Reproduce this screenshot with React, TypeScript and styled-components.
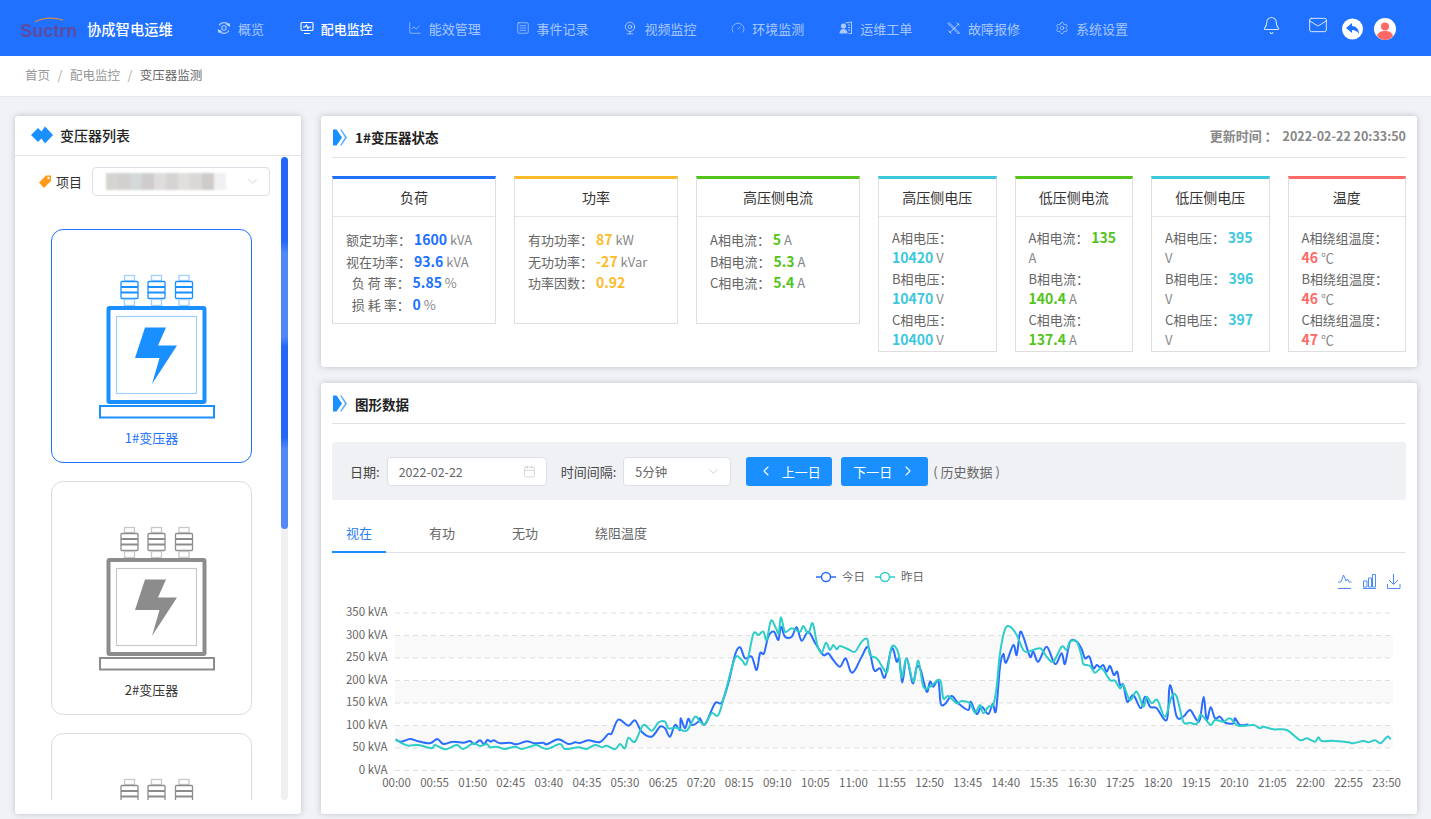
import React from 'react';
import styled, { createGlobalStyle } from 'styled-components';
import {
  Bell,
  Calendar,
  ChartLine,
  ChevronDown,
  ChevronLeft,
  ChevronRight,
  Gauge,
  Mail,
  Settings,
  SquareMenu,
  Webcam
} from 'lucide-react';

const FONT = '"Noto Sans CJK SC", "Noto Sans", sans-serif';

const GlobalStyle = createGlobalStyle`
  html, body {
    margin: 0;
    height: 100%;
    overflow: hidden;
    background: #f0f2f6;
    font-family: ${FONT};
  }
  * {
    box-sizing: border-box;
  }
`;

const Page = styled.div`
  width: 1431px;
  height: 819px;
  display: flex;
  flex-direction: column;
`;

/* top bar */
const TopBar = styled.header`
  height: 56px;
  flex: none;
  background: #2071ff;
  display: flex;
  align-items: center;
  padding-left: 20px;
`;

const Logo = styled.div`
  position: relative;
  width: 56px;
  height: 20px;
  margin-top: 3px;
  font: bold 18px/22px 'Liberation Sans', sans-serif;
  color: #5f4a9c;
  filter: blur(0.4px);
  svg {
    position: absolute;
    left: 14px;
    top: -3px;
  }
`;

const BrandName = styled.div`
  width: 130px;
  margin-left: 11px;
  color: #fff;
  font-size: 14.3px;
  font-weight: 500;
  white-space: nowrap;
`;

const Nav = styled.nav`
  display: flex;
  align-items: center;
  gap: 34.85px;
`;

const NavItem = styled.div<{ $active?: boolean }>`
  display: flex;
  align-items: center;
  gap: 7px;
  font-size: 13px;
  white-space: nowrap;
  color: ${(p) => (p.$active ? '#fff' : 'rgba(255,255,255,.62)')};
  font-weight: ${(p) => (p.$active ? 500 : 400)};
  &:first-child {
    margin-right: 1px;
  }
  svg {
    width: 14px;
    height: 14px;
    flex: none;
  }
`;

const TopRight = styled.div`
  margin-left: auto;
  display: flex;
  align-items: center;
  padding-right: 35px;
  height: 100%;
`;

const TopIcon = styled.div<{ $gap: number; $top: number }>`
  display: flex;
  margin-left: ${(p) => p.$gap}px;
  margin-top: ${(p) => p.$top}px;
  color: rgba(255, 255, 255, 0.82);
`;

/* breadcrumb */
const Crumbs = styled.div`
  height: 41px;
  flex: none;
  background: #fff;
  border-bottom: 1px solid #e6e8ec;
  display: flex;
  align-items: center;
  padding: 0 0 3px 25px;
  font-size: 12.5px;
  color: #999;
`;

const CrumbSep = styled.span`
  margin: 0 7.5px;
  color: #aaa;
`;

const CrumbLast = styled.span`
  color: #666;
`;

/* page body */
const Main = styled.main`
  flex: 1;
  min-height: 0;
  display: grid;
  grid-template-columns: 286px 1fr;
  gap: 20px;
  padding: 19px 14px 5px 15px;
`;

const Panel = styled.section`
  background: #fff;
  border-radius: 3px;
  box-shadow: 0 0 6px rgba(60, 70, 90, 0.28);
`;

const ListPanel = styled(Panel)`
  position: relative;
  display: flex;
  flex-direction: column;
  min-height: 0;
`;

const ListHeader = styled.div`
  height: 40px;
  flex: none;
  display: flex;
  align-items: center;
  gap: 7px;
  padding: 0 0 2px 16px;
  border-bottom: 1px solid #e4e4e4;
  font-size: 14px;
  font-weight: 500;
  color: #222;
`;

const ProjectRow = styled.div`
  display: flex;
  align-items: center;
  flex: none;
  padding: 11px 0 0 23px;
  height: 40px;
`;

const ProjectLabel = styled.div`
  width: 54px;
  display: flex;
  align-items: center;
  gap: 4px;
  font-size: 13px;
  color: #333;
`;

const SelectBox = styled.div<{ $w: number }>`
  position: relative;
  width: ${(p) => p.$w}px;
  height: 29px;
  background: #fff;
  border: 1px solid #dcdfe6;
  border-radius: 4px;
  display: flex;
  align-items: center;
  padding-left: 11px;
  font-size: 12.5px;
  color: #666;
  svg {
    position: absolute;
    right: 9px;
    top: 6px;
    color: #c0c4cc;
  }
`;

const DateIcon = styled(Calendar)`
  && {
    right: 10px;
    top: 7px;
  }
`;

const Mosaic = styled.div`
  display: flex;
  height: 17px;
  margin-left: 2px;
  filter: blur(1px);
`;

const MosaicCell = styled.span<{ $c: string }>`
  width: 12px;
  height: 100%;
  background: ${(p) => p.$c};
`;

const CardList = styled.div`
  flex: 1;
  min-height: 0;
  margin-bottom: 14px;
  margin-top: 33px;
  padding-left: 36px;
  overflow: hidden;
  display: flex;
  flex-direction: column;
  gap: 18px;
`;

const DeviceCard = styled.div<{ $active?: boolean }>`
  width: 201px;
  height: 234px;
  flex: none;
  border: 1px solid ${(p) => (p.$active ? '#2071ff' : '#dcdcdc')};
  border-radius: 12px;
  padding-top: 44px;
  display: flex;
  flex-direction: column;
  align-items: center;
  color: ${(p) => (p.$active ? '#2071ff' : '#333')};
  svg {
    margin-left: 11px;
  }
`;

const DeviceName = styled.div`
  font-size: 13px;
  line-height: 16px;
  margin-top: 11px;
`;

const ScrollTrack = styled.div`
  position: absolute;
  left: 266px;
  top: 41px;
  width: 7px;
  height: 643px;
  border-radius: 4px;
  background: #f0f0f2;
`;

const ScrollThumb = styled.div`
  width: 7px;
  height: 372px;
  border-radius: 4px;
  background: linear-gradient(
    to bottom,
    #2268f5 0 84px,
    #4f88f7 96px 180px,
    #2268f5 190px 280px,
    #5289f6 292px 372px
  );
`;

const RightCol = styled.div`
  display: flex;
  flex-direction: column;
  gap: 16px;
  min-height: 0;
`;

const StatusPanel = styled(Panel)`
  height: 251px;
  flex: none;
  padding: 0 11px;
`;

const ChartPanel = styled(Panel)`
  flex: 1;
  min-height: 0;
  padding: 0 11px;
`;

const SectionHead = styled.div<{ $h: number }>`
  height: ${(p) => p.$h}px;
  display: flex;
  align-items: center;
  gap: 8px;
  border-bottom: 1px solid #e2e2e2;
  padding: 1px 0 0 1px;
  font-size: 13.5px;
  font-weight: 700;
  color: #222;
`;

const UpdateTime = styled.div`
  margin-left: auto;
  margin-top: -4px;
  color: #888;
  font-weight: 700;
  font-size: 13px;
  white-space: nowrap;
`;

const UpdateDate = styled.span`
  font-size: 12.5px;
  margin-left: 2px;
`;

const StatGrid = styled.div`
  display: grid;
  grid-template-columns: repeat(3, 164px) repeat(4, 1fr);
  gap: 18px;
  margin-top: 18px;
  align-items: start;
`;

const StatCard = styled.div<{ $color: string; $tall?: boolean }>`
  height: ${(p) => (p.$tall ? 176 : 148)}px;
  overflow: hidden;
  border: 1px solid #dedede;
  border-top: 3px solid ${(p) => p.$color};
`;

const StatTitle = styled.div`
  height: 38px;
  display: flex;
  align-items: center;
  justify-content: center;
  padding-bottom: 2px;
  border-bottom: 1px solid #e6e6e6;
  font-size: 14px;
  color: #333;
`;

const StatBody = styled.div<{ $tall?: boolean }>`
  padding: ${(p) => (p.$tall ? '11px 13px 0' : '12px 13px 0')};
  font-size: 13px;
  line-height: ${(p) => (p.$tall ? '20.4px' : '21.6px')};
  color: #666;
`;

const StatValue = styled.span<{ $color: string }>`
  font-size: 14px;
  line-height: 1;
  font-weight: 700;
  color: ${(p) => p.$color};
`;

const Unit = styled.span`
  color: #888;
`;

/* filter bar */
const FilterBar = styled.div`
  height: 58px;
  margin-top: 18px;
  background: #f0f1f5;
  border-radius: 3px;
  display: flex;
  align-items: center;
  padding-left: 18px;
  font-size: 13px;
  color: #444;
`;

const FilterLabel = styled.span<{ $left?: number }>`
  margin-left: ${(p) => p.$left || 0}px;
  margin-right: 7px;
  white-space: nowrap;
`;

const DayButton = styled.div<{ $left: number; $w: number }>`
  width: ${(p) => p.$w}px;
  height: 29px;
  margin-left: ${(p) => p.$left}px;
  background: #1a8fff;
  border-radius: 3px;
  color: #fff;
  font-size: 13px;
  display: flex;
  align-items: center;
  justify-content: center;
  gap: 8px;
`;

const Hint = styled.span`
  margin-left: 5px;
  color: #666;
  white-space: nowrap;
`;

/* tabs */
const Tabs = styled.div`
  display: flex;
  gap: 29px;
  margin-top: 20px;
  height: 33px;
  border-bottom: 1px solid #dfe1e6;
`;

const Tab = styled.div<{ $active?: boolean }>`
  padding: 0 14px;
  height: 33px;
  line-height: 26px;
  font-size: 13px;
  color: ${(p) => (p.$active ? '#2a80f0' : '#666')};
  border-bottom: 2px solid ${(p) => (p.$active ? '#1a8fff' : 'transparent')};
`;

const ChartSvg = styled.svg`
  display: block;
  width: 1074px;
  height: 240px;
  margin-top: 7px;
  text {
    font-family: ${FONT};
    font-size: 11.5px;
    fill: #666;
  }
`;

/* chart data, traced in groups: [originX, originY, x/3, y/3 pairs...] */
const scale = (ox: number, oy: number, a: number[]) => {
  const out: [number, number][] = [];
  for (let i = 0; i < a.length; i += 2) out.push([ox + a[i] / 3, oy + a[i + 1] / 3]);
  return out;
};

const todayPts = [
  ...scale(330, 560, [
    197, 540, 215, 545, 240, 537, 265, 544, 300, 550, 322, 537, 340, 552, 370, 545, 400, 548, 420, 543, 432, 552, 450,
    541, 462, 553, 472, 540, 482, 545, 492, 541, 510, 550, 540, 548, 560, 553, 590, 544, 615, 550, 640, 548, 650, 553,
    685, 538, 715, 552, 735, 547, 750, 549, 775, 541, 810, 546, 835, 522, 845, 520, 865, 479, 895, 497, 915, 481, 935,
    515, 965, 530, 990, 500, 1005, 505, 1020, 530, 1035, 495, 1050, 510, 1052, 475, 1065, 505, 1075, 476, 1085, 495,
    1105, 485
  ]),
  ...scale(700, 590, [
    0, 385, 15, 403, 45, 340, 65, 338, 85, 280, 105, 195, 120, 172, 135, 205, 155, 200, 170, 240, 180, 190, 192, 190,
    205, 140, 222, 125, 235, 150, 243, 110, 255, 140, 275, 140, 290, 112, 305, 152, 325, 125, 345, 158, 370, 195, 385,
    190, 400, 210, 420, 230, 437, 205, 452, 245, 465, 240, 485, 200, 505, 172, 522, 240, 540, 235, 555, 262, 575, 175,
    590, 215, 598, 205, 607, 278, 620, 205, 638, 280, 650, 232, 662, 240, 680, 305, 690, 275, 700, 290, 715, 272, 722,
    340, 735, 342, 755, 318, 775, 340, 805, 360, 812, 335, 830, 372, 845, 350, 865, 372, 878, 342, 888, 362, 900, 230,
    910, 192, 918, 218, 940, 165, 950, 195, 960, 128, 970, 140, 990, 200, 1000, 185, 1015, 215, 1040, 170, 1065, 222,
    1085, 190, 1095, 222, 1110, 155, 1130, 155
  ]),
  ...scale(1040, 560, [
    125, 268, 135, 295, 148, 290, 160, 325, 170, 315, 180, 322, 190, 315, 200, 335, 210, 318, 222, 345, 232, 335, 240,
    375, 250, 375, 262, 425, 280, 405, 302, 445, 315, 410, 330, 440, 350, 445, 380, 480, 388, 385, 395, 388, 410, 470,
    430, 470, 450, 450, 470, 480, 480, 478, 491, 410, 500, 480, 512, 442, 525, 475, 540, 470, 555, 488, 580, 490, 585,
    475, 600, 495, 625, 493
  ])
];

const yesterdayPts = [
  ...scale(330, 560, [
    197, 537, 215, 550, 235, 557, 265, 555, 305, 565, 315, 555, 345, 568, 380, 555, 400, 567, 430, 550, 450, 558, 470,
    552, 480, 562, 500, 560, 525, 567, 555, 560, 575, 567, 600, 560, 620, 555, 650, 567, 690, 552, 705, 567, 745, 562,
    770, 567, 795, 555, 815, 562, 830, 557, 855, 568, 870, 552, 885, 565, 895, 533, 915, 545, 940, 495, 965, 512, 985,
    488, 1005, 485, 1015, 505, 1040, 503, 1070, 512, 1095, 470
  ]),
  ...scale(700, 590, [
    0, 395, 15, 403, 35, 370, 55, 375, 75, 310, 105, 205, 125, 210, 140, 220, 160, 132, 175, 135, 190, 125, 200, 150,
    213, 92, 228, 115, 236, 130, 243, 82, 255, 125, 275, 115, 300, 125, 310, 108, 325, 130, 338, 100, 352, 165, 365,
    188, 378, 158, 390, 180, 400, 165, 410, 178, 420, 168, 445, 178, 465, 185, 485, 155, 502, 148, 510, 195, 530, 205,
    550, 235, 562, 245, 575, 170, 595, 188, 605, 262, 620, 205, 640, 275, 655, 212, 670, 290, 690, 290, 720, 270, 730,
    325, 745, 318, 770, 340, 785, 333, 810, 340, 825, 368, 840, 345, 850, 370, 865, 350, 880, 345, 890, 290, 900, 190,
    915, 118, 930, 110, 950, 135, 970, 180, 985, 185, 1020, 175, 1040, 200, 1060, 215, 1085, 170, 1100, 180, 1110, 155,
    1130, 155
  ]),
  ...scale(1040, 560, [
    125, 290, 130, 312, 150, 318, 165, 338, 185, 325, 210, 360, 225, 362, 240, 385, 250, 375, 270, 420, 290, 395, 310,
    440, 320, 410, 335, 430, 352, 420, 375, 470, 395, 410, 410, 410, 430, 485, 450, 488, 470, 492, 480, 465, 490, 470,
    512, 495, 525, 480, 550, 485, 570, 475, 595, 497, 640, 495, 660, 505, 670, 500, 700, 508, 740, 510, 780, 540, 800,
    535, 825, 545, 835, 532, 845, 543, 880, 542, 925, 547, 940, 550, 970, 543, 985, 547, 1005, 541, 1022, 550, 1042,
    530, 1052, 538
  ])
];

const smooth = (pts: [number, number][]) => {
  let d = `M${pts[0][0].toFixed(1)} ${pts[0][1].toFixed(1)}`;
  for (let i = 0; i < pts.length - 1; i++) {
    const p0 = pts[Math.max(i - 1, 0)];
    const p1 = pts[i];
    const p2 = pts[i + 1];
    const p3 = pts[Math.min(i + 2, pts.length - 1)];
    const c1x = p1[0] + (p2[0] - p0[0]) / 6;
    const c1y = p1[1] + (p2[1] - p0[1]) / 6;
    const c2x = p2[0] - (p3[0] - p1[0]) / 6;
    const c2y = p2[1] - (p3[1] - p1[1]) / 6;
    d += `C${c1x.toFixed(1)} ${c1y.toFixed(1)} ${c2x.toFixed(1)} ${c2y.toFixed(1)} ${p2[0].toFixed(1)} ${p2[1].toFixed(1)}`;
  }
  return d;
};

const yLabels = ['350 kVA', '300 kVA', '250 kVA', '200 kVA', '150 kVA', '100 kVA', '50 kVA', '0 kVA'];
const xLabels = [
  '00:00', '00:55', '01:50', '02:45', '03:40', '04:35', '05:30', '06:25', '07:20', '08:15', '09:10', '10:05', '11:00',
  '11:55', '12:50', '13:45', '14:40', '15:35', '16:30', '17:25', '18:20', '19:15', '20:10', '21:05', '22:00', '22:55',
  '23:50'
];

const BLUE = '#2a6cff';
const TEAL = '#2fcdc8';

function PowerChart() {
  return (
    <ChartSvg viewBox="332 560 1074 240">
      {[635.5, 680.5, 725.5].map((y) => (
        <rect key={y} x={395} y={y} width={998} height={22.5} fill="#f9f9f9" />
      ))}
      {yLabels.map((t, i) => {
        const y = 613 + i * 22.5;
        return (
          <g key={t}>
            <line x1={395} x2={1393} y1={y} y2={y} stroke="#dedede" strokeDasharray="5 4" />
            <text x={387.5} y={y + 3} textAnchor="end">
              {t}
            </text>
          </g>
        );
      })}
      {xLabels.map((t, i) => (
        <text key={t} x={396.5 + i * 38.08} y={787} textAnchor="middle">
          {t}
        </text>
      ))}

      <path d={smooth(todayPts)} fill="none" stroke={BLUE} strokeWidth={2} />
      <path d={smooth(yesterdayPts)} fill="none" stroke={TEAL} strokeWidth={2} />

      {/* legend */}
      <line x1={816} x2={836} y1={577} y2={577} stroke={BLUE} strokeWidth={1.5} />
      <circle cx={826} cy={577} r={4.5} fill="#fff" stroke={BLUE} strokeWidth={1.5} />
      <text x={842} y={581}>今日</text>
      <line x1={875} x2={895} y1={577} y2={577} stroke={TEAL} strokeWidth={1.5} />
      <circle cx={885} cy={577} r={4.5} fill="#fff" stroke={TEAL} strokeWidth={1.5} />
      <text x={901} y={581}>昨日</text>

      {/* toolbox */}
      <g fill="none" stroke="#4f8cf7" strokeWidth={1}>
        <path d="M1338 582h3l2.500-7 2.500 6 1.500-2 1.500 3h2.500M1338 588.500h13" />
        <path d="M1363.500 581h3.500v6h-3.500zM1368.500 578h3v9h-3zM1372.500 574.500h3v12.500h-3zM1363 588.500h13" />
        <path d="M1393.500 574v10M1389 580l4.500 4.500 4.500-4.500M1387.500 584v4.500h12.500v-4.500" />
      </g>
    </ChartSvg>
  );
}

function Transformer({ color, light }: { color: string; light: string }) {
  return (
    <svg width={116} height={145} viewBox="0 0 116 145" fill="none">
      {[30.5, 57.5, 85].map((cx) => (
        <g key={cx}>
          <rect x={cx - 5} y={1.5} width={10} height={5} stroke={light} strokeWidth={1.3} />
          <rect x={cx - 8.5} y={7.5} width={17} height={17} rx={1} stroke={color} strokeWidth={1.3} />
          <path d={`M${cx - 8.5} 13h17M${cx - 8.5} 18.5h17`} stroke={color} strokeWidth={1.8} />
          <rect x={cx - 5} y={25.5} width={10} height={6} stroke={light} strokeWidth={1.3} />
        </g>
      ))}
      <rect x={9.5} y={34} width={96} height={94} rx={1} stroke={color} strokeWidth={4} />
      <rect x={17.5} y={42.5} width={80} height={77} stroke={light} strokeWidth={1.2} />
      <path d="M46 53.5h21l-8 18h19L53 110l7.500-26H36z" fill={color} />
      <rect x={1} y={132} width={114} height={11.5} stroke={color} strokeWidth={2} />
    </svg>
  );
}

type Stat = { label: string; value?: string; unit?: string };

const Tag = () => (
  <svg width={14} height={15} viewBox="0 0 14 15">
    <path d="M1 8.5L8 1.5h5v5.500l-7 7z" fill="#ff9a1a" />
    <circle cx={10.5} cy={4} r={1.2} fill="#fff" />
  </svg>
);

const Arrows = () => (
  <svg width={14} height={17} viewBox="0 0 14 17">
    <path d="M0 0.500h3.500L9 8.500l-5.500 8H0z" fill="#1a8fff" />
    <path d="M7 0.500h1.500L14 8.500l-5.500 8H7l5-8z" fill="#55aaff" />
  </svg>
);

const Diamonds = () => (
  <svg width={22} height={18} viewBox="0 0 22 18">
    <path d="M7 2l7 7-7 7-7-7z" fill="#1a8fff" />
    <path d="M14 0.500l8 8.500-8 8.500-6-8.500z" fill="#1a8fff" />
  </svg>
);

const OverviewIcon = () => (
  <svg viewBox="0 0 14 14" fill="none" stroke="currentColor" strokeWidth={1.1}>
    <path d="M2 4.500A6 6 0 0 1 12.500 5M12 9.500A6 6 0 0 1 1.500 9" />
    <circle cx={7} cy={7} r={2.2} />
    <path d="M9 3l3.500 2L12 2M5 11l-3.500-2L2 12" />
  </svg>
);

const MonitorIcon = () => (
  <svg viewBox="0 0 14 14" fill="none" stroke="currentColor" strokeWidth={1.1}>
    <rect x={1} y={1.5} width={12} height={8} rx={1} />
    <path d="M3 6h2l1.500-2 1.500 3.500L9 6h2M4 12.500h6" />
  </svg>
);

const TicketIcon = () => (
  <svg viewBox="0 0 14 14" fill="currentColor">
    <circle cx={4.5} cy={5} r={2.6} />
    <path d="M0.500 12.500c0-3 1.500-4.500 4-4.500s4 1.500 4 4.500z" />
    <path d="M6 1.500l7-1v12.500H9.500v-1H12V1.700L7 2.400z" />
    <path d="M9 4h2M9 6.500h2M9 9h2" stroke="currentColor" />
  </svg>
);

const ToolsIcon = () => (
  <svg viewBox="0 0 14 14" fill="none" stroke="currentColor" strokeWidth={1}>
    <path d="M2 1.500l10.500 10.500-1 1L1 2.500zM12 2.500L2.500 12M9.500 1.500l3 3M1.500 9.500l3 3" />
  </svg>
);

const BackIcon = () => (
  <svg width={21} height={22} viewBox="0 0 21 22">
    <circle cx={10.5} cy={11} r={10.5} fill="#fff" />
    <path d="M4 10l6-5v3c4 0 7 3 7 8-2-3-4-4-7-4v3z" fill="#2071ff" />
  </svg>
);

const AvatarIcon = () => (
  <svg width={22} height={22} viewBox="0 0 22 22">
    <circle cx={11} cy={11} r={11} fill="#fff" />
    <circle cx={11} cy={8.5} r={4} fill="#ff6a66" />
    <path d="M3 18c1-4 4-5 8-5s7 1 8 5c-2 2.500-5 4-8 4s-6-1.500-8-4z" fill="#ff6a66" />
  </svg>
);

const navItems: { label: string; icon: React.ReactNode; active?: boolean }[] = [
  { label: '概览', icon: <OverviewIcon /> },
  { label: '配电监控', icon: <MonitorIcon />, active: true },
  { label: '能效管理', icon: <ChartLine strokeWidth={1.3} /> },
  { label: '事件记录', icon: <SquareMenu strokeWidth={1.3} /> },
  { label: '视频监控', icon: <Webcam strokeWidth={1.5} /> },
  { label: '环境监测', icon: <Gauge strokeWidth={1.3} /> },
  { label: '运维工单', icon: <TicketIcon /> },
  { label: '故障报修', icon: <ToolsIcon /> },
  { label: '系统设置', icon: <Settings strokeWidth={1.3} /> }
];

const COLORS = { blue: '#2071ff', yellow: '#fbbc2c', green: '#52c41a', cyan: '#3cc8dc', red: '#ff6a66' };

const statCards: { title: string; color: string; tall?: boolean; rows: Stat[] }[] = [
  {
    title: '负荷',
    color: COLORS.blue,
    rows: [
      { label: '额定功率：', value: '1600', unit: 'kVA' },
      { label: '视在功率：', value: '93.6', unit: 'kVA' },
      { label: '\u00a0\u00a0负 荷 率：', value: '5.85', unit: '%' },
      { label: '\u00a0\u00a0损 耗 率：', value: '0', unit: '%' }
    ]
  },
  {
    title: '功率',
    color: COLORS.yellow,
    rows: [
      { label: '有功功率：', value: '87', unit: 'kW' },
      { label: '无功功率：', value: '-27', unit: 'kVar' },
      { label: '功率因数：', value: '0.92' }
    ]
  },
  {
    title: '高压侧电流',
    color: COLORS.green,
    rows: [
      { label: 'A相电流：', value: '5', unit: 'A' },
      { label: 'B相电流：', value: '5.3', unit: 'A' },
      { label: 'C相电流：', value: '5.4', unit: 'A' }
    ]
  },
  {
    title: '高压侧电压',
    color: COLORS.cyan,
    tall: true,
    rows: [
      { label: 'A相电压：', value: '10420', unit: 'V' },
      { label: 'B相电压：', value: '10470', unit: 'V' },
      { label: 'C相电压：', value: '10400', unit: 'V' }
    ]
  },
  {
    title: '低压侧电流',
    color: COLORS.green,
    tall: true,
    rows: [
      { label: 'A相电流：', value: '135', unit: 'A' },
      { label: 'B相电流：', value: '140.4', unit: 'A' },
      { label: 'C相电流：', value: '137.4', unit: 'A' }
    ]
  },
  {
    title: '低压侧电压',
    color: COLORS.cyan,
    tall: true,
    rows: [
      { label: 'A相电压：', value: '395', unit: 'V' },
      { label: 'B相电压：', value: '396', unit: 'V' },
      { label: 'C相电压：', value: '397', unit: 'V' }
    ]
  },
  {
    title: '温度',
    color: COLORS.red,
    tall: true,
    rows: [
      { label: 'A相绕组温度：', value: '46', unit: '℃' },
      { label: 'B相绕组温度：', value: '46', unit: '℃' },
      { label: 'C相绕组温度：', value: '47', unit: '℃' }
    ]
  }
];

const mosaic = ['#d6d4d0', '#d2cfcf', '#d3d8d8', '#d0cccd', '#dedcdc', '#d6d3d2', '#e0dfdc', '#dad8d6', '#cfcbcb', '#f0f0f2'];

export default function App() {
  return (
    <Page>
      <GlobalStyle />
      <TopBar>
        <Logo>
          <svg width={30} height={6} viewBox="0 0 30 6" fill="none">
            <path d="M1 5C8 1 18 0 29 3" stroke="#d88a4a" strokeWidth={1.2} />
          </svg>
          Suctrn
        </Logo>
        <BrandName>协成智电运维</BrandName>
        <Nav>
          {navItems.map((n) => (
            <NavItem key={n.label} $active={n.active}>
              {n.icon}
              {n.label}
            </NavItem>
          ))}
        </Nav>
        <TopRight>
          <TopIcon $gap={0} $top={-6}>
            <Bell size={19} strokeWidth={1.3} />
          </TopIcon>
          <TopIcon $gap={27} $top={-6}>
            <Mail size={20} strokeWidth={1.2} />
          </TopIcon>
          <TopIcon $gap={14} $top={2}>
            <BackIcon />
          </TopIcon>
          <TopIcon $gap={11} $top={2}>
            <AvatarIcon />
          </TopIcon>
        </TopRight>
      </TopBar>

      <Crumbs>
        首页
        <CrumbSep>/</CrumbSep>
        配电监控
        <CrumbSep>/</CrumbSep>
        <CrumbLast>变压器监测</CrumbLast>
      </Crumbs>

      <Main>
        <ListPanel>
          <ListHeader>
            <Diamonds />
            变压器列表
          </ListHeader>
          <ProjectRow>
            <ProjectLabel>
              <Tag />
              项目
            </ProjectLabel>
            <SelectBox $w={178}>
              <Mosaic>
                {mosaic.map((c) => (
                  <MosaicCell key={c} $c={c} />
                ))}
              </Mosaic>
              <ChevronDown size={15} strokeWidth={1.2} />
            </SelectBox>
          </ProjectRow>
          <CardList>
            <DeviceCard $active>
              <Transformer color="#1a8fff" light="#9fd0ff" />
              <DeviceName>1#变压器</DeviceName>
            </DeviceCard>
            <DeviceCard>
              <Transformer color="#8c8c8c" light="#c8c8c8" />
              <DeviceName>2#变压器</DeviceName>
            </DeviceCard>
            <DeviceCard>
              <Transformer color="#8c8c8c" light="#c8c8c8" />
            </DeviceCard>
          </CardList>
          <ScrollTrack>
            <ScrollThumb />
          </ScrollTrack>
        </ListPanel>

        <RightCol>
          <StatusPanel>
            <SectionHead $h={42}>
              <Arrows />
              1#变压器状态
              <UpdateTime>
                更新时间 ： <UpdateDate>2022-02-22 20:33:50</UpdateDate>
              </UpdateTime>
            </SectionHead>
            <StatGrid>
              {statCards.map((c) => (
                <StatCard key={c.title} $color={c.color} $tall={c.tall}>
                  <StatTitle>{c.title}</StatTitle>
                  <StatBody $tall={c.tall}>
                    {c.rows.map((r) => (
                      <div key={r.label}>
                        {r.label} <StatValue $color={c.color}>{r.value}</StatValue>
                        {r.unit && <Unit> {r.unit}</Unit>}
                      </div>
                    ))}
                  </StatBody>
                </StatCard>
              ))}
            </StatGrid>
          </StatusPanel>

          <ChartPanel>
            <SectionHead $h={41}>
              <Arrows />
              图形数据
            </SectionHead>
            <FilterBar>
              <FilterLabel>日期:</FilterLabel>
              <SelectBox $w={160}>
                2022-02-22
                <DateIcon size={13} strokeWidth={1.2} />
              </SelectBox>
              <FilterLabel $left={14}>时间间隔:</FilterLabel>
              <SelectBox $w={108}>
                5分钟
                <ChevronDown size={15} strokeWidth={1.2} />
              </SelectBox>
              <DayButton $left={15} $w={86}>
                <ChevronLeft size={16} strokeWidth={1.6} />
                上一日
              </DayButton>
              <DayButton $left={9} $w={87}>
                下一日
                <ChevronRight size={16} strokeWidth={1.6} />
              </DayButton>
              <Hint>( 历史数据 )</Hint>
            </FilterBar>
            <Tabs>
              <Tab $active>视在</Tab>
              <Tab>有功</Tab>
              <Tab>无功</Tab>
              <Tab>绕阻温度</Tab>
            </Tabs>
            <PowerChart />
          </ChartPanel>
        </RightCol>
      </Main>
    </Page>
  );
}
